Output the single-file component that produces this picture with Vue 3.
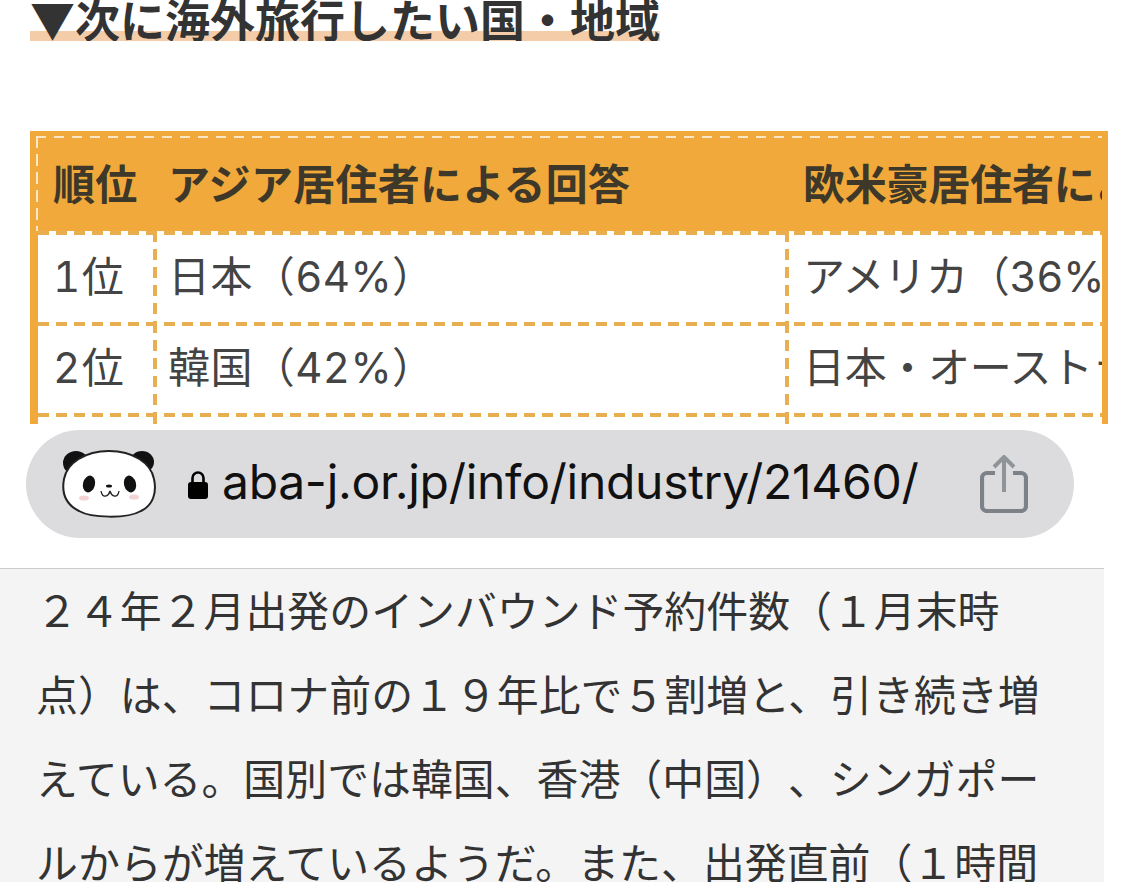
<script setup>
const rows = [
  { rank: '1位', asia: '日本（64%）', west: 'アメリカ（36%）' },
  { rank: '2位', asia: '韓国（42%）', west: '日本・オーストラリア（30%）' },
  { rank: '', asia: '', west: '' }
]
</script>

<template>
  <div class="page" lang="ja">
    <div class="heading-wrap">
      <h2 class="heading">▼次に海外旅行したい国・地域</h2>
    </div>

    <div class="table-frame">
      <div class="table-inner">
        <div class="row head">
          <div class="cell">順位</div>
          <div class="cell">アジア居住者による回答</div>
          <div class="cell">欧米豪居住者による回答</div>
        </div>
        <div v-for="(r, i) in rows" :key="i" class="row body">
          <div class="cell">{{ r.rank }}</div>
          <div class="cell">{{ r.asia }}</div>
          <div class="cell">{{ r.west }}</div>
        </div>
      </div>
    </div>

    <div class="address-bar">
      <svg class="panda" viewBox="0 0 96 70" width="96" height="70">
        <ellipse cx="15" cy="14" rx="13" ry="12" fill="#111" />
        <ellipse cx="81" cy="13" rx="12" ry="11" fill="#111" />
        <path d="M48 2C24 2 6 14 3 30C0 46 6 56 18 62C30 69 66 70 80 62C92 56 96 44 93 30C90 14 72 2 48 2Z" fill="#fff" stroke="#222" stroke-width="2" />
        <ellipse cx="28" cy="35" rx="6" ry="8.5" fill="#111" transform="rotate(14 28 35)" />
        <ellipse cx="69" cy="35" rx="6" ry="8.5" fill="#111" transform="rotate(-14 69 35)" />
        <ellipse cx="23" cy="49" rx="5" ry="2.6" fill="#f3d3d3" />
        <ellipse cx="73" cy="48" rx="5" ry="2.6" fill="#f3d3d3" />
        <ellipse cx="48" cy="37" rx="3" ry="1.5" fill="#111" />
        <path d="M40 42Q41 48 45 47Q48 46 49 42Q50 46 53 47Q57 48 58 42" fill="none" stroke="#222" stroke-width="1.3" />
      </svg>
      <svg class="lock" viewBox="0 0 20 29" width="20" height="29">
        <path d="M4.5 13V8a5.5 5.5 0 0 1 11 0v5" fill="none" stroke="#000" stroke-width="2.6" />
        <rect x="0" y="12" width="20" height="17" rx="3" fill="#000" />
      </svg>
      <span class="url">aba-j.or.jp/info/industry/21460/</span>
      <svg class="share" viewBox="0 0 48 58" width="48" height="58">
        <path d="M15 18H7a5 5 0 0 0-5 5v28a5 5 0 0 0 5 5h34a5 5 0 0 0 5-5V23a5 5 0 0 0-5-5h-8" fill="none" stroke="#7c8287" stroke-width="4.2" />
        <path d="M24 37V3M14 12l10-10 10 10" fill="none" stroke="#8e9498" stroke-width="4" />
      </svg>
    </div>

    <div class="article">
      <p>２４年２月出発のインバウンド予約件数（１月末時点）は、コロナ前の１９年比で５割増と、引き続き増えている。国別では韓国、香港（中国）、シンガポールからが増えているようだ。また、出発直前（１時間</p>
    </div>
  </div>
</template>

<style scoped>
.page { width: 1129px; height: 882px; overflow: hidden; background: #fff; font-family: "Noto Sans CJK JP", "Noto Sans", sans-serif; color: #3a3a3a; }

.heading-wrap { height: 41px; padding-left: 30px; display: flex; overflow: hidden; }
.heading { margin: 0; height: 41px; font-size: 45px; line-height: 37px; font-weight: 700; color: #333; white-space: nowrap; background: linear-gradient(transparent 31px, #f4cda8 31px); }

.table-frame { margin: 90px 0 0 30px; width: 1078px; height: 293px; box-sizing: border-box; padding: 5px 6px 0 6px; background: #f0a93a; overflow: hidden; }
.table-inner {
  height: 288px;
  box-sizing: border-box;
  padding: 2px 0 0 2px;
  overflow: hidden;
  background:
    repeating-linear-gradient(90deg, #fbe6c6 0 10px, transparent 10px 18px) top left / 100% 2px no-repeat,
    repeating-linear-gradient(180deg, #fbe6c6 0 12px, transparent 12px 18px) top left / 2px 95px no-repeat;
}

.row { display: grid; grid-template-columns: 115px 632px 620px; }
.cell { white-space: nowrap; overflow: hidden; box-sizing: border-box; font-family: Inter, "Noto Sans CJK JP", sans-serif; font-size: 42px; font-feature-settings: "tnum"; }
.cell:nth-child(1) { padding-left: 15px; }
.cell:nth-child(2) { padding-left: 15px; }
.cell:nth-child(3) { padding-left: 18px; }
.head { height: 93px; color: #3d3829; }
.head .cell { font-weight: 700; line-height: 94px; letter-spacing: 0.3px; }
.head .cell:nth-child(3) { letter-spacing: -0.2px; }
.body { height: 91px; background: repeating-linear-gradient(90deg, #e8ae52 0 11px, transparent 11px 18px) top left / 100% 4px no-repeat, #fff; }
.body .cell { line-height: 83px; padding-top: 4px; height: 91px; color: #444; letter-spacing: 0.4px; }
.body .cell:nth-child(1) { letter-spacing: 1.5px; }
.body .cell:nth-child(3) { letter-spacing: -0.3px; }
.body .cell:nth-child(n + 2) { background: repeating-linear-gradient(180deg, #e8ae52 0 11px, transparent 11px 18px) top left / 4px 100% no-repeat; }

.address-bar { margin: 6px 0 0 26px; width: 1048px; height: 108px; border-radius: 54px; background: #dcdcdf; display: flex; align-items: center; padding-left: 35px; box-sizing: border-box; }
.panda { flex: none; }
.lock { flex: none; margin-left: 31px; }
.url { margin: 0 0 6px 14px; width: 758px; font-family: Inter, "Liberation Sans", sans-serif; font-size: 48px; letter-spacing: -0.3px; color: #111; white-space: nowrap; }
.share { flex: none; }

.article { margin-top: 30px; width: 1104px; height: 314px; box-sizing: border-box; background: #f4f4f4; border-top: 1px solid #ccc; padding-left: 36px; }
.article p { margin: -2px 0 0; width: 1010px; font-size: 41.9px; line-height: 84px; color: #333; font-weight: 400; line-break: strict; text-spacing-trim: space-all; }
</style>
